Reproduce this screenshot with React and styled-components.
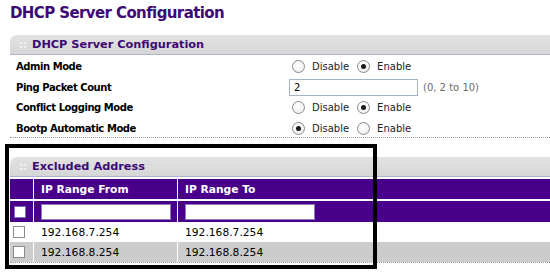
import React from "react";
import styled, { createGlobalStyle } from "styled-components";

const PURPLE = "#48008a";
const TITLE = "#3d0a74";

const GlobalStyle = createGlobalStyle`
  body {
    margin: 0;
    background: #ffffff;
    font-family: "DejaVu Sans", Verdana, sans-serif;
    color: #000;
  }
`;

const Page = styled.div`
  position: relative;
  width: 550px;
  height: 274px;
  overflow: hidden;
  padding-left: 10px;
  box-sizing: border-box;
`;

const Title = styled.h1`
  margin: 0;
  padding-top: 4px;
  height: 35px;
  box-sizing: border-box;
  font-size: 15px;
  line-height: 18px;
  font-weight: bold;
  color: ${TITLE};
  letter-spacing: -0.6px;
`;

const Panel = styled.section`
  margin-top: ${(p) => p.$top || 0}px;
  width: 546px;
`;

const Bar = styled.div`
  height: 19px;
  display: flex;
  align-items: center;
  padding-left: 9px;
  background: linear-gradient(#e2e2e2, #d6d6d6);
  border-top-left-radius: 7px;
  border-top-right-radius: 7px;
  border-bottom: 1px solid #b4b2c8;
`;

const Grip = styled.span`
  font-size: 10px;
  font-weight: bold;
  color: #f4f4f4;
  width: 13px;
`;

const BarTitle = styled.span`
  font-size: 11.3px;
  font-weight: bold;
  color: ${TITLE};
`;

const Form = styled.div`
  border-bottom: 1px dotted #9a9a9a;
  width: 540px;
`;

const Row = styled.div`
  display: grid;
  grid-template-columns: 279px 1fr;
  align-items: center;
  height: 20.5px;
  padding-top: 3px;
  box-sizing: border-box;
`;

const Label = styled.div`
  padding-left: 6px;
  font-size: 10px;
  font-weight: bold;
  letter-spacing: -0.45px;
`;

const Controls = styled.div`
  display: flex;
  align-items: center;
  padding-left: 3px;
  font-size: 10px;
  color: #222;
`;

const Radio = styled.span`
  width: 13px;
  height: 13px;
  box-sizing: border-box;
  border-radius: 50%;
  border: 1px solid #8a8a8a;
  background: radial-gradient(circle at 40% 35%, #ffffff, #ebebeb);
  display: flex;
  align-items: center;
  justify-content: center;
  margin-right: 7px;
  &::after {
    content: "";
    width: 5px;
    height: 5px;
    border-radius: 50%;
    background: ${(p) => (p.$on ? "#1a1a1a" : "transparent")};
  }
`;

const RadioText = styled.span`
  margin-right: 8px;
`;

const TextBox = styled.div`
  width: 129px;
  height: 17px;
  box-sizing: border-box;
  margin-left: -3px;
  border: 1px solid #a5b5c5;
  padding-left: 4px;
  font-size: 10px;
  line-height: 15px;
  color: #000;
`;

const Hint = styled.span`
  margin-left: 5px;
  color: #6b6b6b;
  font-size: 10px;
`;

const Grid = styled.div`
  display: grid;
  grid-template-columns: 23px 143px 1fr;
  column-gap: 1px;
  background: #ffffff;
  margin-top: 2px;
  border-bottom: 1px dotted #9a9a9a;
`;

const Cell = styled.div`
  height: ${(p) => p.$h}px;
  margin-top: ${(p) => p.$gap || 0}px;
  background: ${(p) => p.$bg};
  display: flex;
  align-items: center;
  padding-left: ${(p) => (p.$pad ? 7 : 0)}px;
  font-size: 10.7px;
  color: ${(p) => (p.$head ? "#fff" : "#000")};
  font-weight: ${(p) => (p.$head ? "bold" : "normal")};
`;

const CellInput = styled.div`
  width: 130px;
  height: 16px;
  box-sizing: border-box;
  background: #fff;
  border: 1px solid #8d7cc0;
`;

const Check = styled.span`
  width: 12px;
  height: 12px;
  box-sizing: border-box;
  background: #fff;
  border: 1px solid ${(p) => (p.$light ? "#7f6db8" : "#8a8a8a")};
  margin-left: ${(p) => (p.$light ? 4 : 3)}px;
`;

const Marker = styled.div`
  position: absolute;
  left: 5px;
  top: 144px;
  width: 372px;
  height: 125px;
  box-sizing: border-box;
  border: 4px solid #000;
  pointer-events: none;
`;

const RadioPair = ({ on }) => (
  <Controls>
    <Radio $on={on === "disable"} />
    <RadioText>Disable</RadioText>
    <Radio $on={on === "enable"} />
    <span>Enable</span>
  </Controls>
);

const rows = [
  { from: "192.168.7.254", to: "192.168.7.254", bg: "#ffffff" },
  { from: "192.168.8.254", to: "192.168.8.254", bg: "#cccccc" },
];

export default function App() {
  return (
    <Page>
      <GlobalStyle />
      <Title>DHCP Server Configuration</Title>
      <Panel>
        <Bar>
          <Grip>::</Grip>
          <BarTitle>DHCP Server Configuration</BarTitle>
        </Bar>
        <Form>
          <Row>
            <Label>Admin Mode</Label>
            <RadioPair on="enable" />
          </Row>
          <Row>
            <Label>Ping Packet Count</Label>
            <Controls>
              <TextBox>2</TextBox>
              <Hint>(0, 2 to 10)</Hint>
            </Controls>
          </Row>
          <Row>
            <Label>Conflict Logging Mode</Label>
            <RadioPair on="enable" />
          </Row>
          <Row>
            <Label>Bootp Automatic Mode</Label>
            <RadioPair on="disable" />
          </Row>
        </Form>
      </Panel>
      <Panel $top={19}>
        <Bar>
          <Grip>::</Grip>
          <BarTitle>Excluded Address</BarTitle>
        </Bar>
        <Grid>
          <Cell $h={20} $bg={PURPLE} />
          <Cell $h={20} $bg={PURPLE} $pad $head>IP Range From</Cell>
          <Cell $h={20} $bg={PURPLE} $pad $head>IP Range To</Cell>

          <Cell $h={21} $gap={2} $bg={PURPLE}>
            <Check $light />
          </Cell>
          <Cell $h={21} $gap={2} $bg={PURPLE} $pad>
            <CellInput />
          </Cell>
          <Cell $h={21} $gap={2} $bg={PURPLE} $pad>
            <CellInput />
          </Cell>

          {rows.map((r) => (
            <React.Fragment key={r.from}>
              <Cell $h={20} $bg={r.bg}>
                <Check />
              </Cell>
              <Cell $h={20} $bg={r.bg} $pad>{r.from}</Cell>
              <Cell $h={20} $bg={r.bg} $pad>{r.to}</Cell>
            </React.Fragment>
          ))}
        </Grid>
      </Panel>
      <Marker />
    </Page>
  );
}
